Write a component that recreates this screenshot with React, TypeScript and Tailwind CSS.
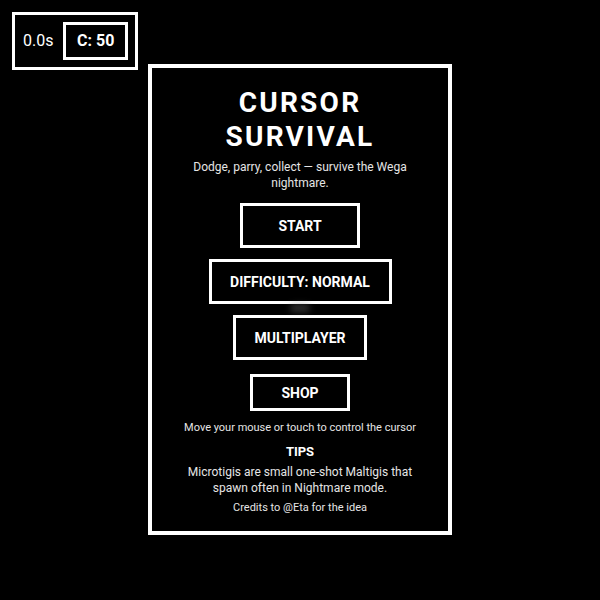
import React from "react";

const FONT = { fontFamily: "Roboto, 'Liberation Sans', sans-serif" };

function MenuButton({ label, className }: { label: string; className: string }) {
  return (
    <button
      className={`border-[3px] border-white bg-black text-white text-[14px] font-bold leading-[16px] flex items-center justify-center ${className}`}
    >
      {label}
    </button>
  );
}

export default function App() {
  return (
    <div className="relative w-[600px] h-[600px] bg-black text-white overflow-hidden" style={FONT}>
      {/* HUD */}
      <div className="absolute left-[12px] top-[12px] w-[126px] h-[58px] border-[3px] border-white flex items-center pl-[8px] pr-[7px] gap-[10px]">
        <span className="text-[16px] leading-[20px]">0.0s</span>
        <span className="ml-auto border-[3px] border-white h-[38px] w-[65px] flex items-center justify-center text-[16px] font-bold leading-[20px]">
          C: 50
        </span>
      </div>

      {/* Menu panel */}
      <div className="absolute left-[148px] top-[64px] w-[304px] h-[471px] border-4 border-white bg-black flex flex-col items-center px-6 pt-[18px] text-center">
        <h1 className="text-[28px] font-bold leading-[34px] tracking-[0.08em]">
          CURSOR
          <br />
          SURVIVAL
        </h1>
        <p className="mt-[5px] text-[12px] leading-[16px] text-neutral-200">
          Dodge, parry, collect — survive the Wega nightmare.
        </p>
        <MenuButton label="START" className="mt-[12px] w-[120px] h-[45px]" />
        <MenuButton label="DIFFICULTY: NORMAL" className="mt-[11px] w-[183px] h-[45px]" />
        <MenuButton label="MULTIPLAYER" className="mt-[11px] w-[134px] h-[45px]" />
        <MenuButton label="SHOP" className="mt-[14px] w-[100px] h-[37px]" />
        <p className="mt-[10px] text-[11px] leading-[14px] text-neutral-200">
          Move your mouse or touch to control the cursor
        </p>
        <h2 className="mt-[9px] text-[13px] font-bold leading-[16px]">TIPS</h2>
        <p className="mt-[4px] text-[12px] leading-[16px] text-neutral-200">
          Microtigis are small one-shot Maltigis that spawn often in Nightmare mode.
        </p>
        <p className="mt-[5px] text-[11px] leading-[14px] text-neutral-200">
          Credits to @Eta for the idea
        </p>
      </div>

      {/* cursor glow */}
      <div className="absolute left-[290px] top-[304px] w-[20px] h-[8px] rounded-full bg-neutral-500/40 blur-[3px]" />
    </div>
  );
}
